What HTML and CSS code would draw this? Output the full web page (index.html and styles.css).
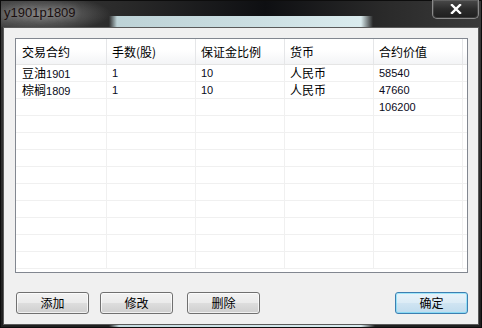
FILE: index.html
```html
<!DOCTYPE html>
<html lang="zh-CN">
<head>
<meta charset="UTF-8" />
<title>y1901p1809</title>
<link rel="stylesheet" href="styles.css">
</head>
<body>
  <div class="window">
    <!-- Aero title bar -->
    <div class="titlebar">
      <span class="title">y1901p1809</span>
      <div class="close-btn" title="关闭">
        <svg viewBox="0 0 12 10" width="12" height="10" aria-hidden="true">
          <path d="M2 1 L10 9 M10 1 L2 9" stroke="#fff" stroke-width="2.4" stroke-linecap="square" />
        </svg>
      </div>
    </div>

    <div class="client">
      <!-- list view -->
      <div class="list">
        <div class="row head">
          <div class="cell first">交易合约</div>
          <div class="cell">手数(股)</div>
          <div class="cell">保证金比例</div>
          <div class="cell">货币</div>
          <div class="cell">合约价值</div>
          <div class="cell filler"></div>
        </div>
        <div class="row">
          <div class="cell first">豆油<span class="num">1901</span></div>
          <div class="cell num">1</div>
          <div class="cell num">10</div>
          <div class="cell">人民币</div>
          <div class="cell num">58540</div>
          <div class="cell filler"></div>
        </div>
        <div class="row">
          <div class="cell first">棕榈<span class="num">1809</span></div>
          <div class="cell num">1</div>
          <div class="cell num">10</div>
          <div class="cell">人民币</div>
          <div class="cell num">47660</div>
          <div class="cell filler"></div>
        </div>
        <div class="row">
          <div class="cell first"></div>
          <div class="cell"></div>
          <div class="cell"></div>
          <div class="cell"></div>
          <div class="cell num">106200</div>
          <div class="cell filler"></div>
        </div>
        <div class="row"><div class="cell first"></div><div class="cell"></div><div class="cell"></div><div class="cell"></div><div class="cell"></div><div class="cell filler"></div></div>
        <div class="row"><div class="cell first"></div><div class="cell"></div><div class="cell"></div><div class="cell"></div><div class="cell"></div><div class="cell filler"></div></div>
        <div class="row"><div class="cell first"></div><div class="cell"></div><div class="cell"></div><div class="cell"></div><div class="cell"></div><div class="cell filler"></div></div>
        <div class="row"><div class="cell first"></div><div class="cell"></div><div class="cell"></div><div class="cell"></div><div class="cell"></div><div class="cell filler"></div></div>
        <div class="row"><div class="cell first"></div><div class="cell"></div><div class="cell"></div><div class="cell"></div><div class="cell"></div><div class="cell filler"></div></div>
        <div class="row"><div class="cell first"></div><div class="cell"></div><div class="cell"></div><div class="cell"></div><div class="cell"></div><div class="cell filler"></div></div>
        <div class="row"><div class="cell first"></div><div class="cell"></div><div class="cell"></div><div class="cell"></div><div class="cell"></div><div class="cell filler"></div></div>
        <div class="row"><div class="cell first"></div><div class="cell"></div><div class="cell"></div><div class="cell"></div><div class="cell"></div><div class="cell filler"></div></div>
        <div class="row"><div class="cell first"></div><div class="cell"></div><div class="cell"></div><div class="cell"></div><div class="cell"></div><div class="cell filler"></div></div>
      </div>

      <!-- dialog buttons -->
      <div class="buttons">
        <button class="btn btn-add">添加</button>
        <button class="btn btn-edit">修改</button>
        <button class="btn btn-del">删除</button>
        <button class="btn btn-ok">确定</button>
      </div>
    </div>
  </div>
</body>
</html>
```

FILE: styles.css
```css
/* Base */
html, body {
  margin: 0;
  padding: 0;
}
body {
  width: 482px;
  height: 328px;
  overflow: hidden;
  background: #1c1c1c;
  font-family: "Noto Sans CJK SC", "Liberation Sans", sans-serif;
  font-size: 12px;
  color: #000;
}

/* Window frame (Aero glass look) */
.window {
  width: 482px;
  height: 328px;
  display: flex;
  flex-direction: column;
  background:
    linear-gradient(90deg, transparent 108px, rgba(215, 240, 245, 0.9) 118px, rgba(225, 245, 248, 0.95) 360px, transparent 374px) 0 318px / 100% 10px no-repeat,
    linear-gradient(180deg, #3a3a3a 0%, #202020 100%);
  box-sizing: border-box;
  border: 1px solid #0d0d0d;
}

.titlebar {
  height: 26px;
  display: flex;
  align-items: flex-start;
  background:
    radial-gradient(ellipse 70px 18px at 40px 13px, rgba(125, 125, 125, 0.95), transparent),
    linear-gradient(90deg, transparent 108px, rgba(215, 240, 245, 0.85) 116px, rgba(228, 246, 249, 0.95) 360px, transparent 372px) 0 15px / 100% 11px no-repeat,
    linear-gradient(90deg, #3c3c3c 0%, #2a2a2a 25%, #0e0f12 55%, #2a2a2a 80%, #3a3a3a 100%);
}
.title {
  margin: 4px 0 0 3px;
  font-family: "Liberation Sans", sans-serif;
  font-size: 13px;
  line-height: 16px;
  color: #1a0f0f;
  text-shadow: 0 0 6px rgba(200, 200, 200, 0.6);
}
.close-btn {
  margin: -1px 2px 0 auto;
  width: 45px;
  height: 18px;
  border: 1px solid #8a8a8a;
  border-top: none;
  border-radius: 0 0 5px 5px;
  background: linear-gradient(180deg, #4a4a4a 0%, #2c2c2c 50%, #1e1e1e 100%);
  display: flex;
  align-items: center;
  justify-content: center;
  box-shadow: inset 0 0 0 1px rgba(255, 255, 255, 0.12);
}

/* Client area */
.client {
  flex: 1;
  margin: 0 2px 2px 2px;
  background: #f0f0f0;
  border: 1px solid #5a5a5a;
  display: flex;
  flex-direction: column;
}

.list {
  margin: 10px 10px 0 11px;
  height: 235px;
  box-sizing: border-box;
  border: 1px solid #828790;
  background: #fff;
  overflow: hidden;
}

.row {
  display: flex;
  height: 17px;
  box-sizing: border-box;
  border-bottom: 1px solid #f0f0f0;
}
.row.head {
  height: 26px;
  border-bottom: 1px solid #e5e5e5;
  background: linear-gradient(180deg, #ffffff 0%, #ffffff 45%, #f3f4f6 100%);
}

.cell {
  width: 89px;
  flex: none;
  box-sizing: border-box;
  border-right: 1px solid #f0f0f0;
  padding-left: 5px;
  line-height: 16px;
  white-space: nowrap;
  overflow: hidden;
}
.cell.first {
  width: 91px;
  padding-left: 6px;
}
.cell.filler {
  flex: 1;
  width: auto;
  border-right: none;
}
.head .cell {
  line-height: 25px;
  border-right: 1px solid #e5e6e8;
  font-size: 12px;
}
.head .cell.filler {
  border-right: none;
}

.num {
  font-family: "Liberation Sans", sans-serif;
  font-size: 11px;
  color: #0a0a20;
}

/* Buttons row */
.buttons {
  display: flex;
  align-items: center;
  margin-top: 19px;
}
.btn {
  width: 73px;
  height: 22px;
  padding: 0;
  box-sizing: border-box;
  border: 1px solid #707070;
  border-radius: 3px;
  background: linear-gradient(180deg, #f2f2f2 0%, #ebebeb 48%, #dddddd 52%, #cfcfcf 100%);
  box-shadow: inset 0 0 0 1px rgba(255, 255, 255, 0.7);
  font-family: "Noto Sans CJK SC", sans-serif;
  font-size: 12px;
  line-height: 18px;
  color: #000;
}
.btn-add { margin-left: 12px; }
.btn-edit { margin-left: 11px; }
.btn-del { margin-left: 14px; }
.btn-ok {
  margin-left: auto;
  margin-right: 10px;
  border-color: #3c7fb1;
  background: linear-gradient(180deg, #e8f3fa 0%, #dcecf6 48%, #cfe4f2 52%, #c0dcee 100%);
  box-shadow: inset 0 0 0 1px rgba(72, 216, 251, 0.45);
}
```
